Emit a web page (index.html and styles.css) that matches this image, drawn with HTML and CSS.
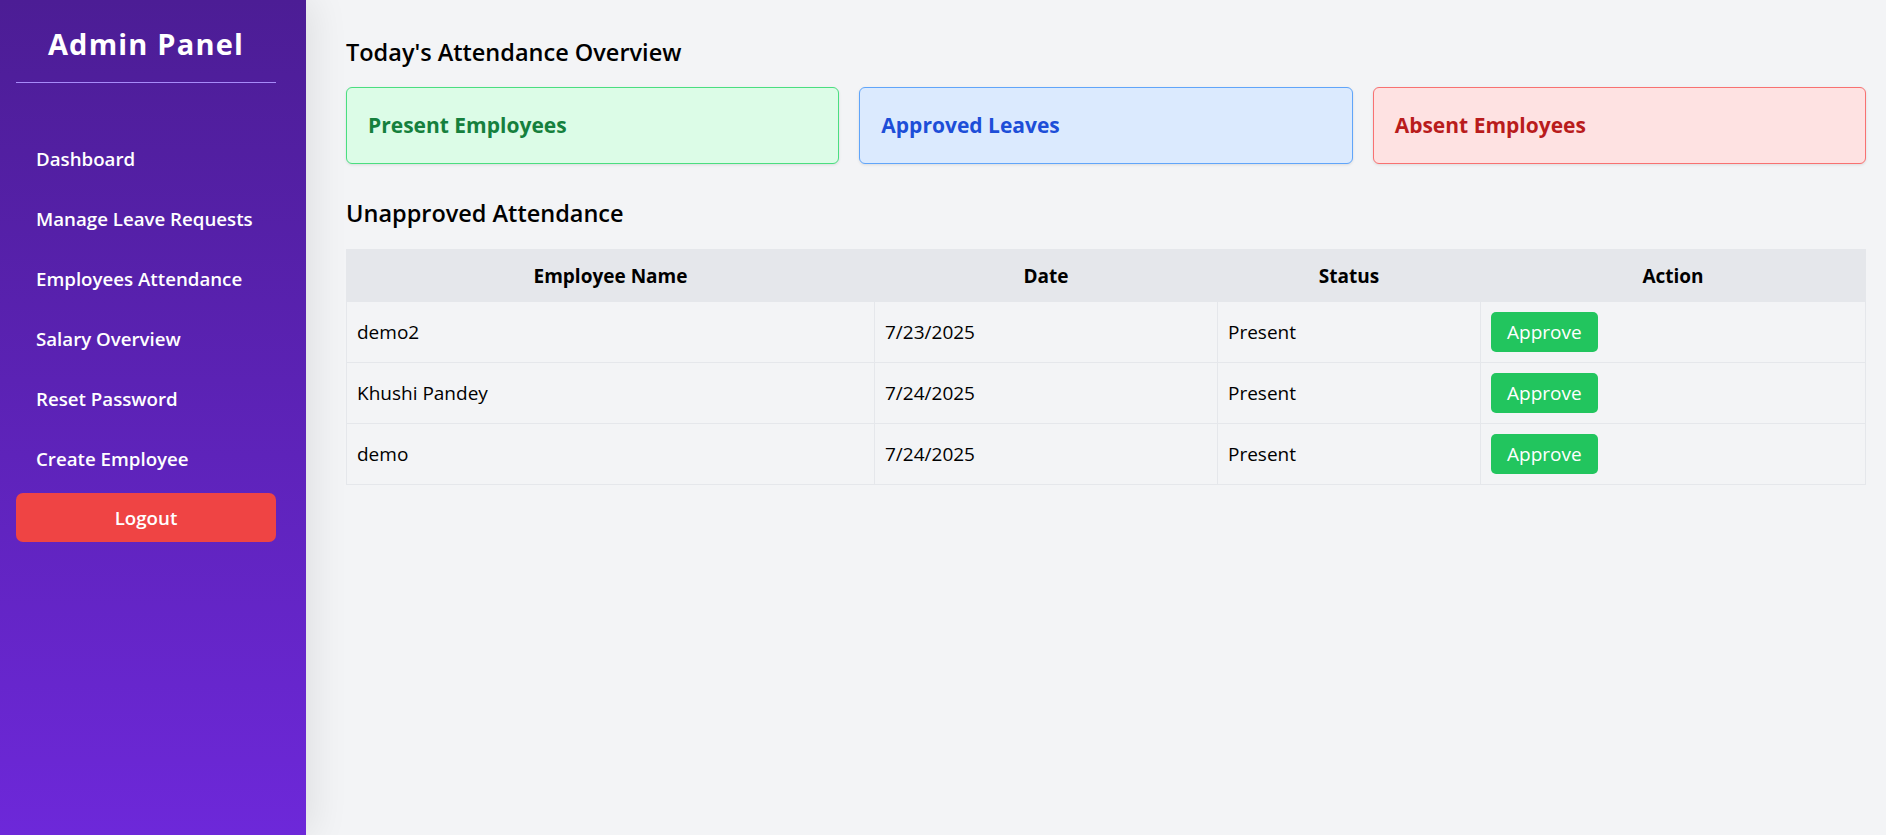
FILE: index.html
```html
<!DOCTYPE html>
<html lang="en">
<head>
<meta charset="utf-8">
<title>Admin Panel</title>
<link rel="stylesheet" href="styles.css">
</head>
<body>
<div class="layout">
  <aside class="sidebar">
    <h1 class="brand">Admin Panel</h1>
    <div class="divider"></div>
    <nav class="nav">
      <a class="nav-item" href="#">Dashboard</a>
      <a class="nav-item" href="#">Manage Leave Requests</a>
      <a class="nav-item" href="#">Employees Attendance</a>
      <a class="nav-item" href="#">Salary Overview</a>
      <a class="nav-item" href="#">Reset Password</a>
      <a class="nav-item" href="#">Create Employee</a>
      <button class="logout">Logout</button>
    </nav>
  </aside>
  <main class="main">
    <h2 class="section-title">Today's Attendance Overview</h2>
    <div class="cards">
      <div class="card card-green">Present Employees</div>
      <div class="card card-blue">Approved Leaves</div>
      <div class="card card-red">Absent Employees</div>
    </div>
    <h2 class="section-title second">Unapproved Attendance</h2>
    <table class="table">
      <colgroup>
        <col class="c1"><col class="c2"><col class="c3"><col class="c4">
      </colgroup>
      <thead>
        <tr><th>Employee Name</th><th>Date</th><th>Status</th><th>Action</th></tr>
      </thead>
      <tbody>
        <tr><td>demo2</td><td>7/23/2025</td><td>Present</td><td><button class="approve">Approve</button></td></tr>
        <tr><td>Khushi Pandey</td><td>7/24/2025</td><td>Present</td><td><button class="approve">Approve</button></td></tr>
        <tr><td>demo</td><td>7/24/2025</td><td>Present</td><td><button class="approve">Approve</button></td></tr>
      </tbody>
    </table>
  </main>
</div>
</body>
</html>
```
FILE: styles.css
```css
* { box-sizing: border-box; }
html, body { margin: 0; padding: 0; }
body {
  font-family: "Open Sans", "Noto Sans", sans-serif;
  background: #f3f4f6;
  color: #000;
}
.layout {
  display: flex;
  height: 100vh;
  overflow: hidden;
}
.sidebar {
  width: 306px;
  flex: 0 0 306px;
  background: linear-gradient(180deg, #4c1d95 0%, #6d28d9 100%);
  padding: 26px 30px 16px 16px;
  position: relative;
  z-index: 2;
  box-shadow: 6px 0 36px rgba(0, 0, 0, 0.09);
}
.brand {
  margin: 0;
  color: #fff;
  font-size: 29px;
  line-height: 36px;
  font-weight: 700;
  letter-spacing: 1.2px;
  text-align: center;
}
.divider {
  margin-top: 20px;
  height: 1px;
  background: #a78bfa;
}
.nav {
  display: flex;
  flex-direction: column;
  gap: 10px;
  margin-top: 50px;
}
.nav-item {
  display: flex;
  align-items: center;
  height: 50px;
  padding: 0 20px;
  color: #fff;
  text-decoration: none;
  font-size: 18.7px;
  font-weight: 600;
  white-space: nowrap;
}
.logout {
  height: 49px;
  border: none;
  border-radius: 7px;
  background: #ef4444;
  color: #fff;
  font-family: inherit;
  font-size: 18.7px;
  font-weight: 600;
}
.main {
  flex: 1;
  padding: 35px 20px 0 40px;
}
.section-title {
  margin: 0;
  font-size: 23.5px;
  line-height: 34px;
  font-weight: 600;
}
.section-title.second {
  margin-top: 32px;
}
.cards {
  display: grid;
  grid-template-columns: repeat(3, 1fr);
  gap: 20px;
  margin-top: 18px;
}
.card {
  border: 1px solid;
  border-radius: 6px;
  padding: 20px 21px;
  font-size: 21px;
  line-height: 35px;
  font-weight: 700;
  box-shadow: 0 1px 3px rgba(0, 0, 0, 0.1);
}
.card-green { background: #dcfce7; border-color: #4ade80; color: #15803d; }
.card-blue { background: #dbeafe; border-color: #60a5fa; color: #1d4ed8; }
.card-red { background: #fee2e2; border-color: #f87171; color: #b91c1c; }
.table {
  margin-top: 19px;
  width: 100%;
  border-collapse: collapse;
  table-layout: fixed;
  border: 1px solid #e5e7eb;
  font-size: 19px;
}
.c1 { width: 528px; }
.c2 { width: 343px; }
.c3 { width: 263px; }
.c4 { width: auto; }
.table th {
  background: #e5e7eb;
  font-weight: 700;
  text-align: center;
  padding: 12px 10px 10px;
  line-height: 29px;
  border: 1px solid #e5e7eb;
}
.table td {
  padding: 10px;
  line-height: 29px;
  border: 1px solid #e5e7eb;
  vertical-align: middle;
}
.approve {
  display: block;
  height: 40px;
  padding: 0 16px;
  border: none;
  border-radius: 5px;
  background: #22c55e;
  color: #fff;
  font-family: inherit;
  font-size: 19px;
}
```
